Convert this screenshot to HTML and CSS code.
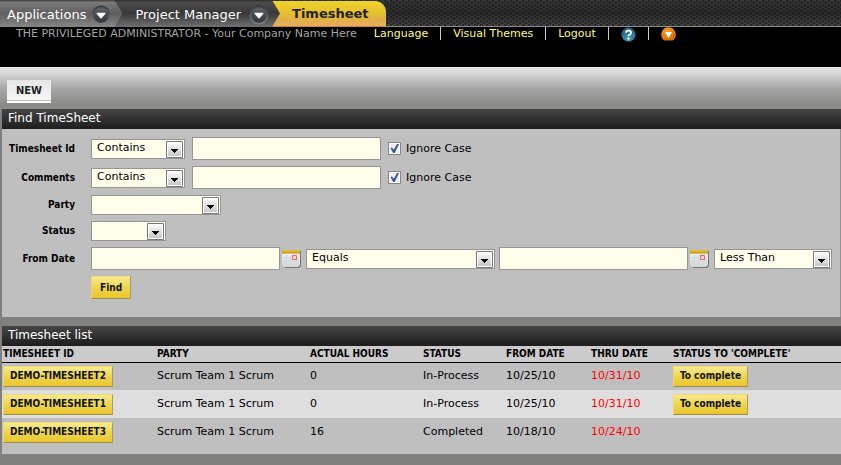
FILE: index.html
```html
<!DOCTYPE html>
<html lang="en">
<head>
<meta charset="utf-8">
<title>Timesheet</title>
<link rel="stylesheet" href="styles.css">
</head>
<body>
<svg class="defs" aria-hidden="true">
  <defs>
    <linearGradient id="ring" x1="0" y1="0" x2="0" y2="1"><stop offset="0" stop-color="#33373b"/><stop offset="1" stop-color="#7b8085"/></linearGradient>
    <linearGradient id="disc" x1="0" y1="0" x2="0" y2="1"><stop offset="0" stop-color="#5d6268"/><stop offset="1" stop-color="#30353b"/></linearGradient>
    <radialGradient id="blue" cx=".5" cy=".8" r=".8"><stop offset="0" stop-color="#4b9cb8"/><stop offset="1" stop-color="#185672"/></radialGradient>
    <radialGradient id="orange" cx=".4" cy=".3" r=".8"><stop offset="0" stop-color="#f9a026"/><stop offset="1" stop-color="#cf6500"/></radialGradient>
    <linearGradient id="paper" x1="0" y1="0" x2="0" y2="1"><stop offset="0" stop-color="#f1f1f1"/><stop offset="1" stop-color="#d2d6d6"/></linearGradient>
    <linearGradient id="key" x1="0" y1="0" x2="0" y2="1"><stop offset="0" stop-color="#fafafa"/><stop offset="1" stop-color="#c6c6c6"/></linearGradient>
    <symbol id="down" viewBox="0 0 22 22"><circle cx="11" cy="11" r="10.5" fill="url(#ring)"/><circle cx="11" cy="11" r="8.5" fill="url(#disc)"/><path d="M6.500 8.500h9q.8.4.3 1.100L11.600 14.500q-.6.5-1.200 0L6.200 9.600q-.5-.7.3-1.100z" fill="#fff"/></symbol>
    <symbol id="calendar" viewBox="0 0 20 20"><path d="M2 2h18v15l-2 2H4z" fill="#777"/><path d="M1 3h18v12q0 3-3 3H4q-3 0-3-3z" fill="url(#paper)"/><path d="M1 1h18v3H1z" fill="#e2b92c"/><path d="M1 4h18" stroke="#b18a13"/><path d="M5.500 6v10M9.500 6v10M2 8.500h8M2 12.500h14" stroke="#d3dbde" fill="none"/><path d="M11.500 6.500h4v4h-4z" fill="#f5dddd" stroke="#f05e5e"/></symbol>
    <symbol id="drop" viewBox="0 0 17 17"><path d="M.5.5h16v16H.5z" fill="#fff" stroke="#777"/><path d="M2 2h13v13H2z" fill="url(#key)"/><path d="M5 8h7v1h-1v1h-1v1H9v1H8v-1H7v-1H6V9H5z" fill="#000"/></symbol>
  </defs>
</svg>

<header>
  <nav class="tabs" aria-label="Applications">
    <div class="tab tab-apps"><a href="#">Applications</a><button type="button" class="round" aria-label="Show applications"><svg><use href="#down"/></svg></button></div>
    <div class="tab tab-project"><a href="#">Project Manager</a><button type="button" class="round" aria-label="Show sections"><svg><use href="#down"/></svg></button></div>
    <div class="tab tab-current"><a href="#">Timesheet</a></div>
  </nav>
  <div class="userbar">
    <span class="who">THE PRIVILEGED ADMINISTRATOR - Your Company Name Here</span>
    <a href="#">Language</a>
    <a class="sep" href="#">Visual Themes</a>
    <a class="sep" href="#">Logout</a>
    <a class="sep" href="#" aria-label="Help"><svg class="dot" viewBox="0 0 15 15"><circle cx="7.500" cy="7.500" r="7.200" fill="url(#blue)"/><path d="M5 5.800Q5.100 3.500 7.600 3.500T10 5.700Q10 7 8.500 7.700 7.500 8.200 7.500 9.200" fill="none" stroke="#fff" stroke-width="1.800"/><circle cx="7.500" cy="11.600" r="1.200" fill="#fff"/></svg></a>
    <a class="sep" href="#" aria-label="Collapse header"><svg class="dot" viewBox="0 0 15 15"><path d="M7.500.2A7.300 7.300 0 0 1 11.600 13.500H3.400A7.300 7.300 0 0 1 7.500.2z" fill="url(#orange)"/><path d="M4 5h7L7.500 11z" fill="#fff"/></svg></a>
  </div>
</header>

<div class="actions"><button type="button" class="new">NEW</button></div>

<main>
  <section class="screenlet">
    <h2>Find TimeSheet</h2>
    <form class="find">
      <label class="name" for="id">Timesheet Id</label>
      <div class="fields">
        <span class="pick"><select class="w-op" aria-label="Timesheet Id condition"><option>Contains</option></select><svg><use href="#drop"/></svg></span>
        <input class="text gap" type="text" id="id">
        <label class="case"><input type="checkbox" checked>Ignore Case</label>
      </div>
      <label class="name" for="comments">Comments</label>
      <div class="fields">
        <span class="pick"><select class="w-op" aria-label="Comments condition"><option>Contains</option></select><svg><use href="#drop"/></svg></span>
        <input class="text gap" type="text" id="comments">
        <label class="case"><input type="checkbox" checked>Ignore Case</label>
      </div>
      <label class="name" for="party">Party</label>
      <div class="fields"><span class="pick"><select class="w-party" id="party"><option></option></select><svg><use href="#drop"/></svg></span></div>
      <label class="name" for="status">Status</label>
      <div class="fields"><span class="pick"><select class="w-status" id="status"><option></option></select><svg><use href="#drop"/></svg></span></div>
      <label class="name" for="from">From Date</label>
      <div class="fields">
        <input class="text" type="text" id="from">
        <button type="button" class="cal" aria-label="Pick start date"><svg><use href="#calendar"/></svg></button>
        <span class="pick"><select class="w-from" aria-label="Start condition"><option>Equals</option></select><svg><use href="#drop"/></svg></span>
        <input class="text next" type="text" aria-label="End date">
        <button type="button" class="cal" aria-label="Pick end date"><svg><use href="#calendar"/></svg></button>
        <span class="pick"><select class="w-to" aria-label="End condition"><option>Less Than</option></select><svg><use href="#drop"/></svg></span>
      </div>
      <button type="submit" class="gold submit">Find</button>
    </form>
  </section>

  <section class="screenlet list">
    <h2>Timesheet list</h2>
    <table>
      <colgroup><col class="c-id"><col class="c-party"><col class="c-hours"><col class="c-status"><col class="c-from"><col class="c-thru"><col></colgroup>
      <thead><tr><th>TIMESHEET ID</th><th>PARTY</th><th>ACTUAL HOURS</th><th>STATUS</th><th>FROM DATE</th><th>THRU DATE</th><th>STATUS TO 'COMPLETE'</th></tr></thead>
      <tbody>
        <tr><td><button type="button" class="gold">DEMO-TIMESHEET2</button></td><td>Scrum Team 1 Scrum</td><td>0</td><td>In-Process</td><td>10/25/10</td><td class="late">10/31/10</td><td><button type="button" class="gold">To complete</button></td></tr>
        <tr><td><button type="button" class="gold">DEMO-TIMESHEET1</button></td><td>Scrum Team 1 Scrum</td><td>0</td><td>In-Process</td><td>10/25/10</td><td class="late">10/31/10</td><td><button type="button" class="gold">To complete</button></td></tr>
        <tr><td><button type="button" class="gold">DEMO-TIMESHEET3</button></td><td>Scrum Team 1 Scrum</td><td>16</td><td>Completed</td><td>10/18/10</td><td class="late">10/24/10</td><td></td></tr>
      </tbody>
    </table>
  </section>
</main>
</body>
</html>
```
FILE: styles.css
```css
* { box-sizing: border-box; }
body { margin: 0; background: #80807e; font: 11px/14px "DejaVu Sans", Verdana, sans-serif; color: #000; }
a { color: inherit; text-decoration: none; }
button, input, select { font: inherit; margin: 0; }
svg { display: block; }
.defs { position: absolute; width: 0; height: 0; }

/* Application tabs */
.tabs {
  display: flex; height: 27px; border-bottom: 1px solid #8d8d8d;
  background: radial-gradient(circle at 1px 1px, #181818, transparent 2px) 0 0/6px 4px,
    radial-gradient(circle at 4px 3px, #181818, transparent 2px) 0 0/6px 4px,
    linear-gradient(#3a3a3a, #2a2a2a 50%, #444);
}
.tab { display: flex; align-items: center; height: 27px; padding-top: 2px; font-size: 13px; color: #fff; white-space: nowrap; }
.tab-apps, .tab-project { clip-path: polygon(0 0, calc(100% - 8px) 0, 100% 50%, calc(100% - 8px) 100%, 0 100%); }
.tab-apps { position: relative; z-index: 2; padding-left: 7px; padding-right: 11px; background: linear-gradient(#4a4a4a 1px, #7b7b7b 2px, #5e5e5e 50%, #868686); }
.tab-project { position: relative; z-index: 1; margin-left: -8px; padding-left: 21px; padding-right: 11px; background: linear-gradient(#333 1px, #4c4c4c 2px, #383838 50%, #707070); }
.tab-current { margin: 1px 0 0 -8px; height: 26px; padding: 1px 17px 0 20px; border-radius: 0 11px 0 0; background: linear-gradient(#efd42d, #e7c42b 40%, #e2af45 75%, #e3ae62); border-bottom: 1px solid #d08a16; color: #222; font-weight: bold; }
.round { width: 20px; height: 20px; margin-left: 5px; padding: 0; border: 0; background: none; }
.tab-project .round { margin-left: 8px; }
.round svg { width: 20px; height: 20px; }

.userbar { display: flex; height: 40px; padding-left: 16px; background: #000; color: #ffff73; white-space: nowrap; }
.who { color: #a5a5a5; margin-right: 17px; }
.sep { height: 13px; margin-left: 12px; padding-left: 12px; border-left: 1px solid #ccc; }
.dot { width: 15px; height: 15px; }

/* Page actions */
.actions { padding: 13px 7px 6px; background: linear-gradient(#eaeaea, #a8a8a8 50%, #8a8a88 90%); }
.new { display: block; height: 23px; padding: 0 9px; border: 0; border-bottom: 2px solid #fff; background: linear-gradient(#e6e6e6, #f6f6f6 20px, #bbb 20px); font: bold 11px/22px "DejaVu Sans Condensed", Tahoma, sans-serif; color: #222; }

/* Screenlets */
main { padding-left: 2px; }
.screenlet { background: #bfbfbf; margin-bottom: 9px; }
h2 { margin: 0; height: 20px; padding-left: 6px; background: linear-gradient(#454545, #1d1d1d); color: #fff; font-size: 12px; line-height: 18px; font-weight: normal; }
.find { display: grid; grid-template-columns: 73px 1fr; column-gap: 16px; row-gap: 6px; align-items: center; padding: 8px 8px 18px 0; border-right: 1px solid #929292; }
.name { text-align: right; font-family: "DejaVu Sans Condensed", Tahoma, sans-serif; font-size: 10px; font-weight: bold; }
.fields { display: flex; align-items: center; }
.pick { position: relative; }
.pick svg { position: absolute; right: 2px; top: 2px; width: 17px; height: 17px; pointer-events: none; }
select { display: block; appearance: none; height: 20px; padding: 0 22px 1px 5px; border: 1px solid #959595; border-radius: 0; background: #fffeeb; color: #000; }
.text { width: 189px; height: 23px; padding: 0 5px; border: 1px solid #959595; background: #fffeeb; }
.w-op { width: 94px; }
.w-party { width: 130px; }
.w-status { width: 75px; }
.w-from { width: 189px; }
.w-to { width: 118px; }
.gap { margin-left: 7px; }
.next { margin-left: 4px; }
.case { display: flex; align-items: center; gap: 5px; margin-left: 7px; }
.case input { appearance: none; width: 13px; height: 13px; border: 1px solid #858585; background: #eee; position: relative; box-shadow: inset 0 0 0 1px #fff; }
.case input:checked::after { content: ""; position: absolute; inset: 1px; background: #3c5796; clip-path: polygon(5% 45%, 22% 40%, 42% 65%, 78% 0, 100% 0, 52% 100%, 35% 100%); }
.cal { width: 20px; height: 20px; margin: 0 5px 0 1px; padding: 0; border: 0; background: none; }
.cal svg { width: 20px; height: 20px; }

.gold { display: block; height: 21px; padding: 0 6px; border: 1px solid #f1da6b; border-right-color: #a99b64; border-bottom-color: #a08e4b; background: linear-gradient(#f8ea91, #efd755 45%, #e9c52c); color: #111; font: bold 10px/18px "DejaVu Sans Condensed", Tahoma, sans-serif; white-space: nowrap; }
.submit { grid-column: 2; justify-self: start; height: 23px; padding: 0 8px; }

/* Timesheet list */
.list { padding-bottom: 8px; }
table { width: 100%; table-layout: fixed; border-collapse: collapse; }
.c-id { width: 154px; }
.c-party { width: 153px; }
.c-hours { width: 113px; }
.c-status { width: 83px; }
.c-from { width: 85px; }
.c-thru { width: 82px; }
th { height: 16px; padding: 0 1px; border-bottom: 1px solid #000; background: #cbcbcb; text-align: left; font: bold 10px/14px "DejaVu Sans Condensed", Tahoma, sans-serif; white-space: nowrap; }
td { height: 28px; padding: 0 1px; white-space: nowrap; }
tbody tr:nth-child(even) { background: #dedede; }
.late { color: #f00; }
```
